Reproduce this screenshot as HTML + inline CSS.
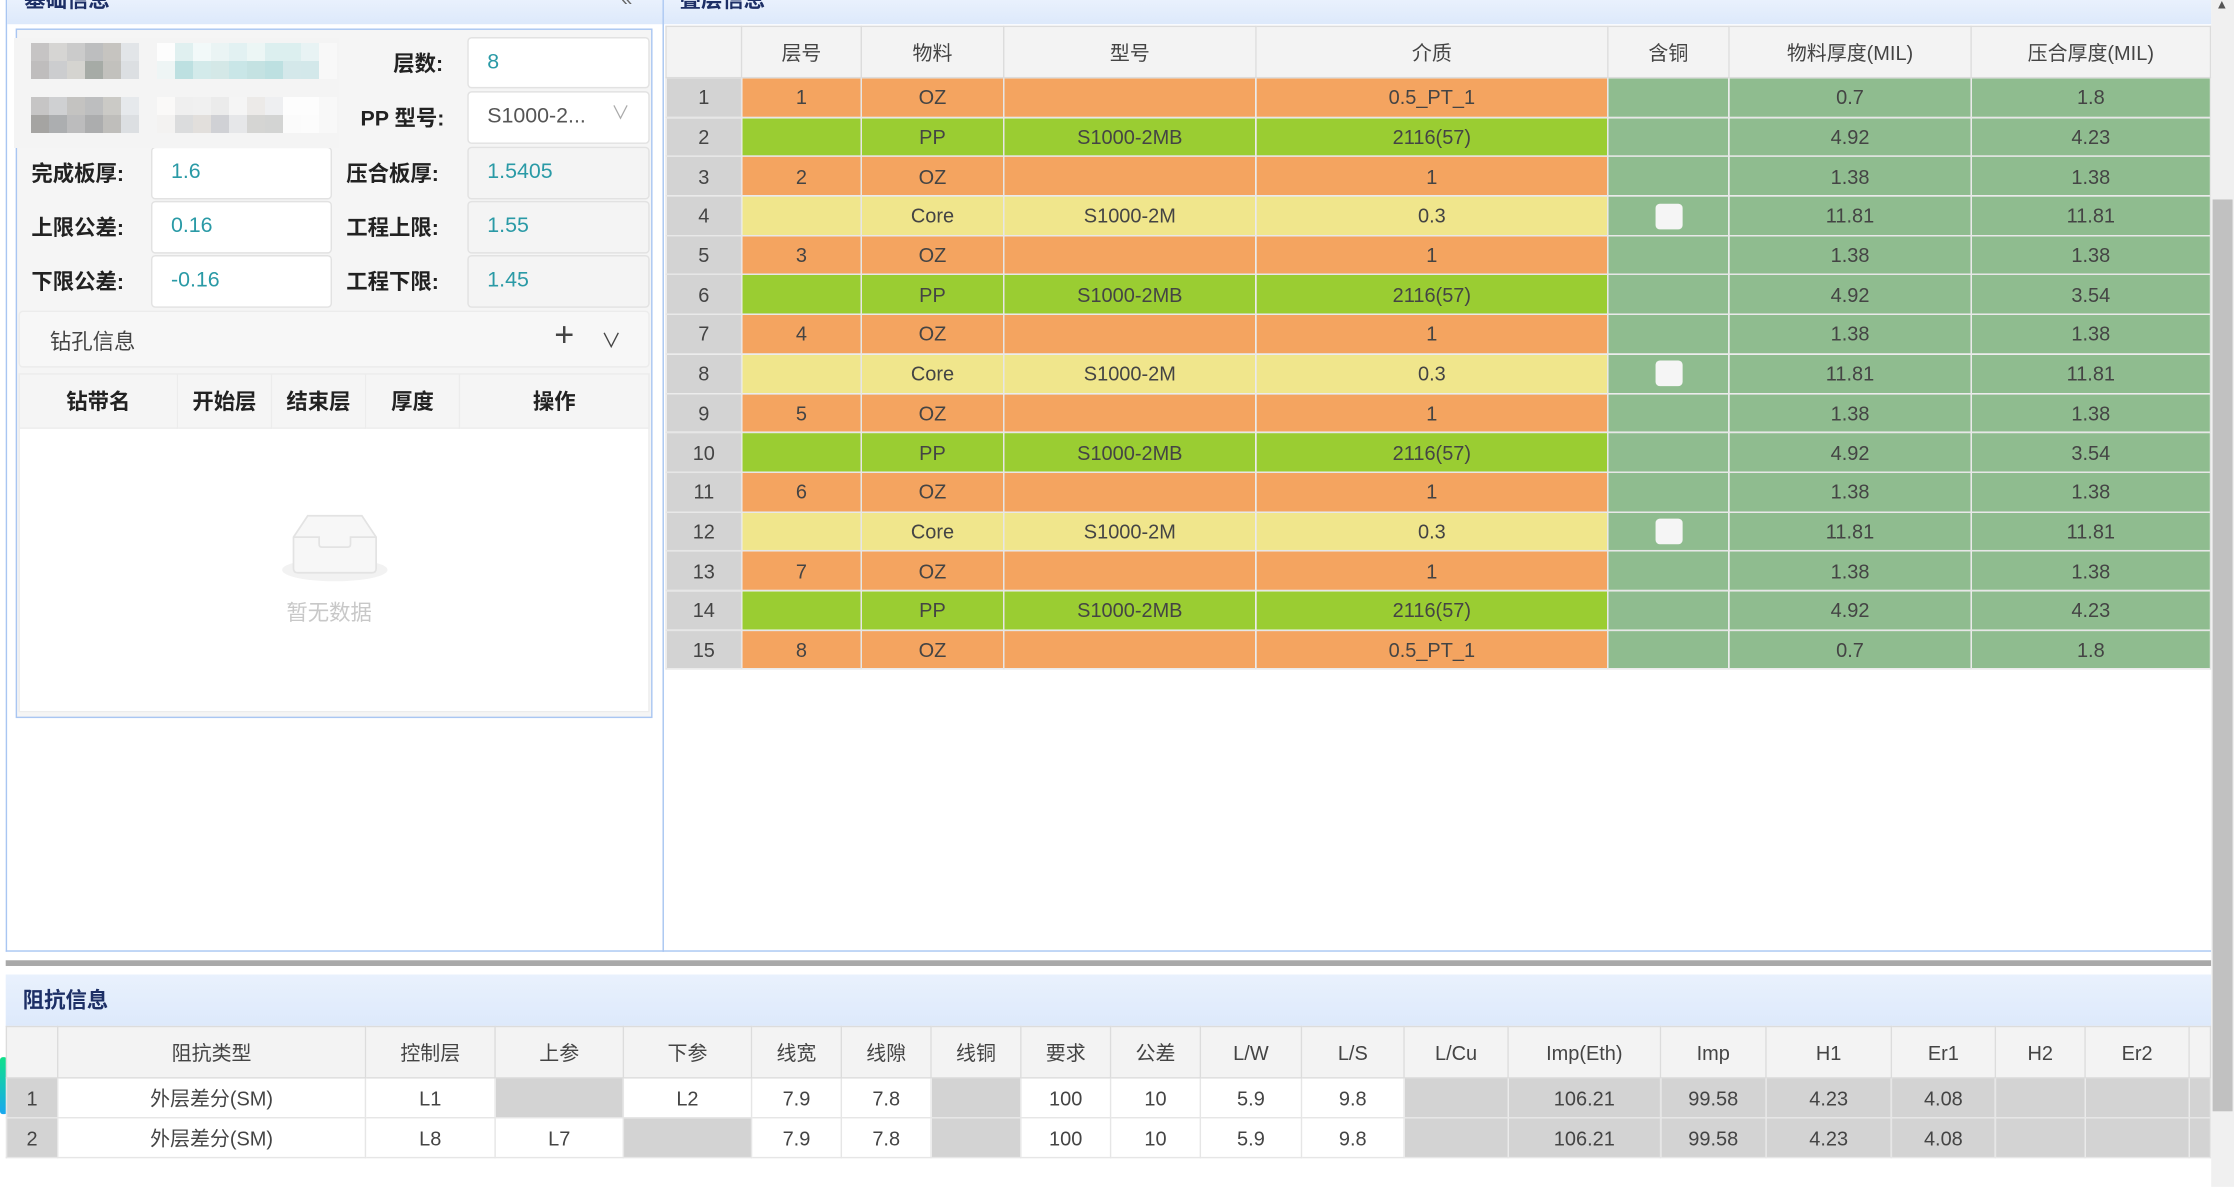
<!DOCTYPE html>
<html><head><meta charset="utf-8"><style>
*{margin:0;padding:0;box-sizing:border-box}
html,body{width:2234px;height:1187px;overflow:hidden;background:#fff}
body{font-family:"Liberation Sans","Noto Sans CJK SC",sans-serif;color:#333}
#w{position:absolute;left:0;top:0;width:1568px;height:833px;transform:scale(1.424745);transform-origin:0 0;font-size:14px}
.a{position:absolute}
.hdr{background:linear-gradient(#e9f1fd,#dde9fb)}
.ttl{font-weight:bold;color:#1d2f66;font-size:15px}
table{border-collapse:collapse;table-layout:fixed;position:absolute}
td,th{border:1px solid #e6e6e6;text-align:center;font-weight:normal;color:#444;font-size:14px;white-space:nowrap;overflow:hidden}
th{background:#f3f3f3;border-color:#dcdcdc}
.n{background:#d3d3d3}
.O{background:#f4a460}.G{background:#9acd32}.Y{background:#f0e68c}.S{background:#8fbc8f}
.gr{background:#d3d3d3}
.chk{display:inline-block;width:19px;height:18px;background:#f5f5f5;border-radius:3px;vertical-align:middle}
.lbl{position:absolute;font-weight:bold;color:#222;font-size:15px}
.inp{position:absolute;background:#fff;border:1px solid #e2e2e2;border-radius:3px;color:#2a9aa6;font-size:15px;padding-left:13px;line-height:34px}
.ro{background:#f4f4f4}
</style></head><body>
<div id="w">
<!-- left panel -->
<div class="a" style="left:4px;top:0;width:462px;height:668px;border:1px solid #a9c6f2;border-top:none"></div>
<div class="a hdr" style="left:5px;top:0;width:460px;height:17px"></div>
<div class="a ttl" style="left:17px;top:-11px">基础信息</div>
<div class="a" style="left:436px;top:-9px;color:#666;font-size:14px">«</div>
<div class="a" style="left:11px;top:20px;width:447px;height:484px;border:1px solid #a9c6f2;background:#f5f5f5"></div>
<div class="inp" style="left:328px;top:26px;width:128px;height:36px">8</div>
<div class="lbl" style="left:276px;top:34px">层数:</div>
<div class="inp" style="left:328px;top:64px;width:128px;height:37px;color:#555">S1000-2...<span style="position:absolute;right:13px;top:-2px;color:#aaa;font-size:13px">∨</span></div>
<div class="lbl" style="left:253px;top:72px">PP 型号:</div>
<div class="lbl" style="left:22px;top:111px">完成板厚:</div>
<div class="inp" style="left:106px;top:103px;width:127px;height:37px">1.6</div>
<div class="lbl" style="left:243px;top:111px">压合板厚:</div>
<div class="inp ro" style="left:328px;top:103px;width:128px;height:37px">1.5405</div>
<div class="lbl" style="left:22px;top:149px">上限公差:</div>
<div class="inp" style="left:106px;top:141px;width:127px;height:37px">0.16</div>
<div class="lbl" style="left:243px;top:149px">工程上限:</div>
<div class="inp ro" style="left:328px;top:141px;width:128px;height:37px">1.55</div>
<div class="lbl" style="left:22px;top:187px">下限公差:</div>
<div class="inp" style="left:106px;top:179px;width:127px;height:37px">-0.16</div>
<div class="lbl" style="left:243px;top:187px">工程下限:</div>
<div class="inp ro" style="left:328px;top:179px;width:128px;height:37px">1.45</div>
<div class="a" style="left:13px;top:218px;width:443px;height:40px;background:#f7f7f7;border:1px solid #ececec;border-radius:3px"></div>
<div class="a" style="left:35px;top:229px;font-size:15px;color:#444">钻孔信息</div>
<div class="a" style="left:389px;top:222px;font-size:24px;color:#444;font-weight:300">+</div>
<div class="a" style="left:422px;top:229px;font-size:14px;color:#444">∨</div>
<div class="a" style="left:13px;top:262px;width:443px;height:238px;background:#fff;border:1px solid #ececec"></div>
<table style="left:13px;top:262px;width:443px">
<tr style="height:38px"><th style="width:111px;font-weight:bold;color:#222;background:#f5f5f5;border-color:#ececec;font-size:15px">钻带名</th><th style="width:66px;font-weight:bold;color:#222;background:#f5f5f5;border-color:#ececec;font-size:15px">开始层</th><th style="width:66px;font-weight:bold;color:#222;background:#f5f5f5;border-color:#ececec;font-size:15px">结束层</th><th style="width:66px;font-weight:bold;color:#222;background:#f5f5f5;border-color:#ececec;font-size:15px">厚度</th><th style="font-weight:bold;color:#222;background:#f5f5f5;border-color:#ececec;font-size:15px">操作</th></tr>
</table>
<svg class="a" style="left:195px;top:355px" width="80" height="55" viewBox="0 0 80 55">
<ellipse cx="40" cy="45" rx="37" ry="8" fill="#f2f2f2"/>
<path d="M11 22 L21 7 L59 7 L69 22 L69 44 Q69 47 66 47 L14 47 Q11 47 11 44 Z" fill="#f7f7f7" stroke="#e3e3e3" stroke-width="1.2"/>
<path d="M11 22 L29 22 L29 27 Q29 29 31 29 L49 29 Q51 29 51 27 L51 22 L69 22" fill="none" stroke="#e3e3e3" stroke-width="1.2"/>
</svg>
<div class="a" style="left:201px;top:419px;color:#c8c8c8;font-size:15px">暂无数据</div>

<!-- right panel -->
<div class="a" style="left:465px;top:0;width:1087px;height:668px;border-bottom:1px solid #a9c6f2"></div>
<div class="a hdr" style="left:466px;top:0;width:1086px;height:17px"></div>
<div class="a ttl" style="left:477px;top:-11px">叠层信息</div>
<table style="left:467px;top:18px;width:1085px">
<colgroup><col style="width:53px"><col style="width:84px"><col style="width:100px"><col style="width:177px"><col style="width:247px"><col style="width:85px"><col style="width:170px"><col></colgroup>
<tr style="height:36px"><th></th><th>层号</th><th>物料</th><th>型号</th><th>介质</th><th>含铜</th><th>物料厚度(MIL)</th><th>压合厚度(MIL)</th></tr>
<tr style="height:27.7px"><td class="n">1</td><td class="O">1</td><td class="O">OZ</td><td class="O"></td><td class="O">0.5_PT_1</td><td class="S"></td><td class="S">0.7</td><td class="S">1.8</td></tr>
<tr style="height:27.7px"><td class="n">2</td><td class="G"></td><td class="G">PP</td><td class="G">S1000-2MB</td><td class="G">2116(57)</td><td class="S"></td><td class="S">4.92</td><td class="S">4.23</td></tr>
<tr style="height:27.7px"><td class="n">3</td><td class="O">2</td><td class="O">OZ</td><td class="O"></td><td class="O">1</td><td class="S"></td><td class="S">1.38</td><td class="S">1.38</td></tr>
<tr style="height:27.7px"><td class="n">4</td><td class="Y"></td><td class="Y">Core</td><td class="Y">S1000-2M</td><td class="Y">0.3</td><td class="S"><span class="chk"></span></td><td class="S">11.81</td><td class="S">11.81</td></tr>
<tr style="height:27.7px"><td class="n">5</td><td class="O">3</td><td class="O">OZ</td><td class="O"></td><td class="O">1</td><td class="S"></td><td class="S">1.38</td><td class="S">1.38</td></tr>
<tr style="height:27.7px"><td class="n">6</td><td class="G"></td><td class="G">PP</td><td class="G">S1000-2MB</td><td class="G">2116(57)</td><td class="S"></td><td class="S">4.92</td><td class="S">3.54</td></tr>
<tr style="height:27.7px"><td class="n">7</td><td class="O">4</td><td class="O">OZ</td><td class="O"></td><td class="O">1</td><td class="S"></td><td class="S">1.38</td><td class="S">1.38</td></tr>
<tr style="height:27.7px"><td class="n">8</td><td class="Y"></td><td class="Y">Core</td><td class="Y">S1000-2M</td><td class="Y">0.3</td><td class="S"><span class="chk"></span></td><td class="S">11.81</td><td class="S">11.81</td></tr>
<tr style="height:27.7px"><td class="n">9</td><td class="O">5</td><td class="O">OZ</td><td class="O"></td><td class="O">1</td><td class="S"></td><td class="S">1.38</td><td class="S">1.38</td></tr>
<tr style="height:27.7px"><td class="n">10</td><td class="G"></td><td class="G">PP</td><td class="G">S1000-2MB</td><td class="G">2116(57)</td><td class="S"></td><td class="S">4.92</td><td class="S">3.54</td></tr>
<tr style="height:27.7px"><td class="n">11</td><td class="O">6</td><td class="O">OZ</td><td class="O"></td><td class="O">1</td><td class="S"></td><td class="S">1.38</td><td class="S">1.38</td></tr>
<tr style="height:27.7px"><td class="n">12</td><td class="Y"></td><td class="Y">Core</td><td class="Y">S1000-2M</td><td class="Y">0.3</td><td class="S"><span class="chk"></span></td><td class="S">11.81</td><td class="S">11.81</td></tr>
<tr style="height:27.7px"><td class="n">13</td><td class="O">7</td><td class="O">OZ</td><td class="O"></td><td class="O">1</td><td class="S"></td><td class="S">1.38</td><td class="S">1.38</td></tr>
<tr style="height:27.7px"><td class="n">14</td><td class="G"></td><td class="G">PP</td><td class="G">S1000-2MB</td><td class="G">2116(57)</td><td class="S"></td><td class="S">4.92</td><td class="S">4.23</td></tr>
<tr style="height:27.7px"><td class="n">15</td><td class="O">8</td><td class="O">OZ</td><td class="O"></td><td class="O">0.5_PT_1</td><td class="S"></td><td class="S">0.7</td><td class="S">1.8</td></tr>
</table>

<!-- splitter -->
<div class="a" style="left:4px;top:674px;width:1548px;height:4px;background:#a9a9a9"></div>
<div class="a hdr" style="left:4px;top:684px;width:1548px;height:36px"></div>
<div class="a ttl" style="left:16px;top:691px">阻抗信息</div>
<div class="a" style="left:0;top:742px;width:5px;height:40px;background:linear-gradient(#10e08a,#19a8f0);border-radius:2px"></div>
<table style="left:4px;top:720px;width:1548px">
<colgroup><col style="width:36px"><col style="width:216px"><col style="width:91px"><col style="width:90px"><col style="width:90px"><col style="width:63px"><col style="width:63px"><col style="width:63px"><col style="width:63px"><col style="width:63px"><col style="width:71px"><col style="width:72px"><col style="width:73px"><col style="width:107px"><col style="width:74px"><col style="width:88px"><col style="width:73px"><col style="width:63px"><col style="width:73px"><col></colgroup>
<tr style="height:36px"><th></th><th>阻抗类型</th><th>控制层</th><th>上参</th><th>下参</th><th>线宽</th><th>线隙</th><th>线铜</th><th>要求</th><th>公差</th><th>L/W</th><th>L/S</th><th>L/Cu</th><th>Imp(Eth)</th><th>Imp</th><th>H1</th><th>Er1</th><th>H2</th><th>Er2</th><th></th></tr>
<tr style="height:28px"><td class="n">1</td><td>外层差分(SM)</td><td>L1</td><td class="gr"></td><td>L2</td><td>7.9</td><td>7.8</td><td class="gr"></td><td>100</td><td>10</td><td>5.9</td><td>9.8</td><td class="gr"></td><td class="gr">106.21</td><td class="gr">99.58</td><td class="gr">4.23</td><td class="gr">4.08</td><td class="gr"></td><td class="gr"></td><td class="gr"></td></tr>
<tr style="height:28px"><td class="n">2</td><td>外层差分(SM)</td><td>L8</td><td>L7</td><td class="gr"></td><td>7.9</td><td>7.8</td><td class="gr"></td><td>100</td><td>10</td><td>5.9</td><td>9.8</td><td class="gr"></td><td class="gr">106.21</td><td class="gr">99.58</td><td class="gr">4.23</td><td class="gr">4.08</td><td class="gr"></td><td class="gr"></td><td class="gr"></td></tr>
</table>

<!-- scrollbar -->
<div class="a" style="left:1552px;top:0;width:16px;height:833px;background:#f0f0f0"></div>
<div class="a" style="left:1553px;top:140px;width:14px;height:640px;background:#c1c1c1"></div>
<div class="a" style="left:1555px;top:-2px;font-size:9px;color:#555">▲</div>
</div>

<!-- blurred pixel blocks (full coords) -->
<div class="a" style="left:14px;top:38px;width:325px;height:110px;background:#f4f4f4"></div>
<div class="a" style="left:31px;top:43px;display:grid;grid-template-columns:repeat(6,18px);grid-auto-rows:18px">
<i style="background:#c6c4c4"></i><i style="background:#d6d5d3"></i><i style="background:#cbcbcb"></i><i style="background:#bdbebf"></i><i style="background:#c6c4c0"></i><i style="background:#e2e5e8"></i>
<i style="background:#bfbdbd"></i><i style="background:#cccdcf"></i><i style="background:#d5d4d0"></i><i style="background:#a6aba6"></i><i style="background:#c2c1bd"></i><i style="background:#dcdfe2"></i>
</div>
<div class="a" style="left:31px;top:97px;display:grid;grid-template-columns:repeat(6,18px);grid-auto-rows:18px">
<i style="background:#c6c5c5"></i><i style="background:#cfd0d2"></i><i style="background:#c4c3c1"></i><i style="background:#bdbebf"></i><i style="background:#cbcac6"></i><i style="background:#e6e9ec"></i>
<i style="background:#a5a4a2"></i><i style="background:#acaeb0"></i><i style="background:#bcbcbd"></i><i style="background:#acadae"></i><i style="background:#bfbebb"></i><i style="background:#dcdfe2"></i>
</div>
<div class="a" style="left:157px;top:43px;display:grid;grid-template-columns:repeat(10,18px);grid-auto-rows:18px">
<i style="background:#fdfdfd"></i><i style="background:#e0f0f0"></i><i style="background:#f2f9f9"></i><i style="background:#eaf4f4"></i><i style="background:#e2f1f2"></i><i style="background:#ecf6f5"></i><i style="background:#dcefef"></i><i style="background:#dcefef"></i><i style="background:#e8f3f4"></i><i style="background:#f8f8f8"></i>
<i style="background:#eef5f5"></i><i style="background:#bde0e1"></i><i style="background:#d3eaea"></i><i style="background:#d4e8e7"></i><i style="background:#c9e6e7"></i><i style="background:#c4e2e2"></i><i style="background:#bde0e1"></i><i style="background:#d4e8ea"></i><i style="background:#d3e8ea"></i><i style="background:#f8f8f8"></i>
</div>
<div class="a" style="left:157px;top:97px;display:grid;grid-template-columns:repeat(10,18px);grid-auto-rows:18px">
<i style="background:#faf9f8"></i><i style="background:#efefef"></i><i style="background:#f0f0f0"></i><i style="background:#ebebeb"></i><i style="background:#f5f5f5"></i><i style="background:#eceae8"></i><i style="background:#eeeff1"></i><i style="background:#fdfdfd"></i><i style="background:#fdfdfd"></i><i style="background:#f8f8f8"></i>
<i style="background:#f3f2f1"></i><i style="background:#dbdcdd"></i><i style="background:#e2dfdc"></i><i style="background:#d0d1d5"></i><i style="background:#e6e7e9"></i><i style="background:#d5d5d3"></i><i style="background:#d3d4d3"></i><i style="background:#fbfbfb"></i><i style="background:#fcfcfc"></i><i style="background:#f8f8f8"></i>
</div>
</body></html>
